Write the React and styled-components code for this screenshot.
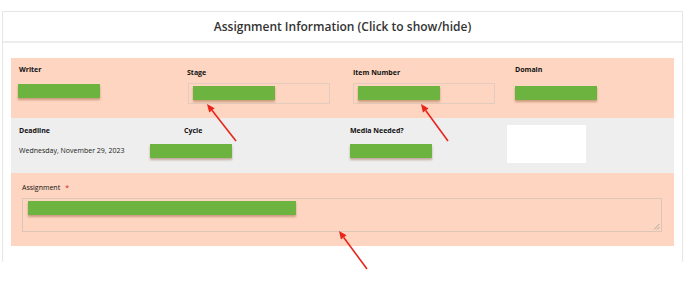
import React from 'react';
import styled, { createGlobalStyle } from 'styled-components';

const GlobalStyle = createGlobalStyle`
  html, body {
    margin: 0;
    padding: 0;
    background: #ffffff;
    font-family: "Open Sans", "Liberation Sans", sans-serif;
    color: #222222;
  }
`;

const PEACH = '#fdd5c0';
const GRAY = '#eeeeee';

const Page = styled.div`
  position: relative;
  width: 690px;
  height: 288px;
  overflow: hidden;
  padding-top: 11px;
  box-sizing: border-box;
`;

const Panel = styled.div`
  margin-left: 2px;
  width: 681px;
  height: 251px;
  box-sizing: border-box;
  border: 1px solid #e6e6e6;
  border-bottom: none;
`;

const PanelHeader = styled.div`
  height: 31px;
  display: flex;
  align-items: center;
  justify-content: center;
  border-bottom: 2px solid #ededed;
  box-sizing: border-box;
  font-size: 12px;
  font-weight: 600;
  color: #333333;
`;

const PanelBody = styled.div`
  padding: 15px 8px 0 8px;
`;

const Section = styled.div`
  display: flex;
  align-items: flex-start;
  background: ${(p) => p.$bg};
  height: ${(p) => p.$height}px;
  padding-left: ${(p) => p.$pad}px;
  box-sizing: border-box;
`;

const Field = styled.div`
  display: flex;
  flex-direction: column;
  align-items: flex-start;
  width: ${(p) => (p.$width ? `${p.$width}px` : 'auto')};
  flex: ${(p) => (p.$width ? 'none' : '1')};
  padding-top: ${(p) => p.$top}px;
  gap: ${(p) => p.$gap}px;
  box-sizing: border-box;
`;

const Label = styled.div`
  font-size: 7px;
  line-height: 10px;
  font-weight: ${(p) => (p.$plain ? 400 : 700)};
  color: #111111;
  margin-left: ${(p) => p.$indent || 0}px;
  white-space: nowrap;
`;

const Required = styled.span`
  color: #e02020;
  margin-left: 5px;
`;

const Value = styled.div`
  font-size: 7px;
  line-height: 10px;
  color: #222222;
  white-space: nowrap;
`;

const Redacted = styled.div`
  width: ${(p) => p.$width || 82}px;
  height: 14px;
  background: #6db33f;
  box-shadow: 0 2px 2px rgba(130, 70, 30, 0.4);
  margin-left: ${(p) => p.$indent || 0}px;
`;

const InputBox = styled.div`
  width: 142px;
  height: 21px;
  box-sizing: border-box;
  border: 1px solid #e3cbbd;
  padding: 2px 0 0 4px;
  margin-left: ${(p) => p.$indent || 0}px;
`;

const WhiteBox = styled.div`
  width: 79px;
  height: 38px;
  background: #ffffff;
  margin-top: 7px;
`;

const TextArea = styled.div`
  width: 640px;
  height: 34px;
  box-sizing: border-box;
  border: 1px solid #dcc6b8;
  padding: 2px 0 0 5px;
  overflow: hidden;
  position: relative;
`;

const Grip = styled.svg`
  position: absolute;
  right: 1px;
  bottom: 1px;
`;

const Annotations = styled.svg`
  position: absolute;
  left: 0;
  top: 0;
  pointer-events: none;
`;

const Arrow = ({ x1, y1, x2, y2 }) => {
  const dx = x2 - x1;
  const dy = y2 - y1;
  const len = Math.hypot(dx, dy);
  const ux = dx / len;
  const uy = dy / len;
  const head = 8;
  const half = 3.5;
  const bx = x2 - ux * head;
  const by = y2 - uy * head;
  const pts = `${x2},${y2} ${bx - uy * half},${by + ux * half} ${bx + uy * half},${by - ux * half}`;
  return (
    <g>
      <line x1={x1} y1={y1} x2={bx} y2={by} stroke="#e8261c" strokeWidth="1.6" />
      <polygon points={pts} fill="#e8261c" />
    </g>
  );
};

const App = () => (
  <Page>
    <GlobalStyle />
    <Panel>
      <PanelHeader>Assignment Information (Click to show/hide)</PanelHeader>
      <PanelBody>
        <Section $bg={PEACH} $height={60} $pad={7}>
          <Field $width={169} $top={7} $gap={9}>
            <Label $indent={1}>Writer</Label>
            <Redacted />
          </Field>
          <Field $width={166} $top={10} $gap={5}>
            <Label>Stage</Label>
            <InputBox $indent={1}>
              <Redacted />
            </InputBox>
          </Field>
          <Field $width={162} $top={10} $gap={5}>
            <Label>Item Number</Label>
            <InputBox>
              <Redacted />
            </InputBox>
          </Field>
          <Field $top={7} $gap={11}>
            <Label>Domain</Label>
            <Redacted />
          </Field>
        </Section>
        <Section $bg={GRAY} $height={55} $pad={8}>
          <Field $width={131} $top={8} $gap={10}>
            <Label>Deadline</Label>
            <Value>Wednesday, November 29, 2023</Value>
          </Field>
          <Field $width={200} $top={8} $gap={8}>
            <Label $indent={34}>Cycle</Label>
            <Redacted />
          </Field>
          <Field $width={157} $top={8} $gap={8}>
            <Label>Media Needed?</Label>
            <Redacted />
          </Field>
          <WhiteBox />
        </Section>
        <Section $bg={PEACH} $height={73} $pad={11}>
          <Field $top={10} $gap={5}>
            <Label $plain>
              Assignment<Required>*</Required>
            </Label>
            <TextArea>
              <Redacted $width={268} />
              <Grip width="7" height="7" viewBox="0 0 7 7">
                <line x1="6.5" y1="1" x2="1" y2="6.5" stroke="#9a9a9a" strokeWidth="0.8" />
                <line x1="6.5" y1="4" x2="4" y2="6.5" stroke="#9a9a9a" strokeWidth="0.8" />
              </Grip>
            </TextArea>
          </Field>
        </Section>
      </PanelBody>
    </Panel>
    <Annotations width="690" height="288" viewBox="0 0 690 288">
      <Arrow x1={236} y1={141} x2={207} y2={104} />
      <Arrow x1={448} y1={141} x2={421} y2={104} />
      <Arrow x1={367} y1={269} x2={339} y2={231} />
    </Annotations>
  </Page>
);

export default App;
